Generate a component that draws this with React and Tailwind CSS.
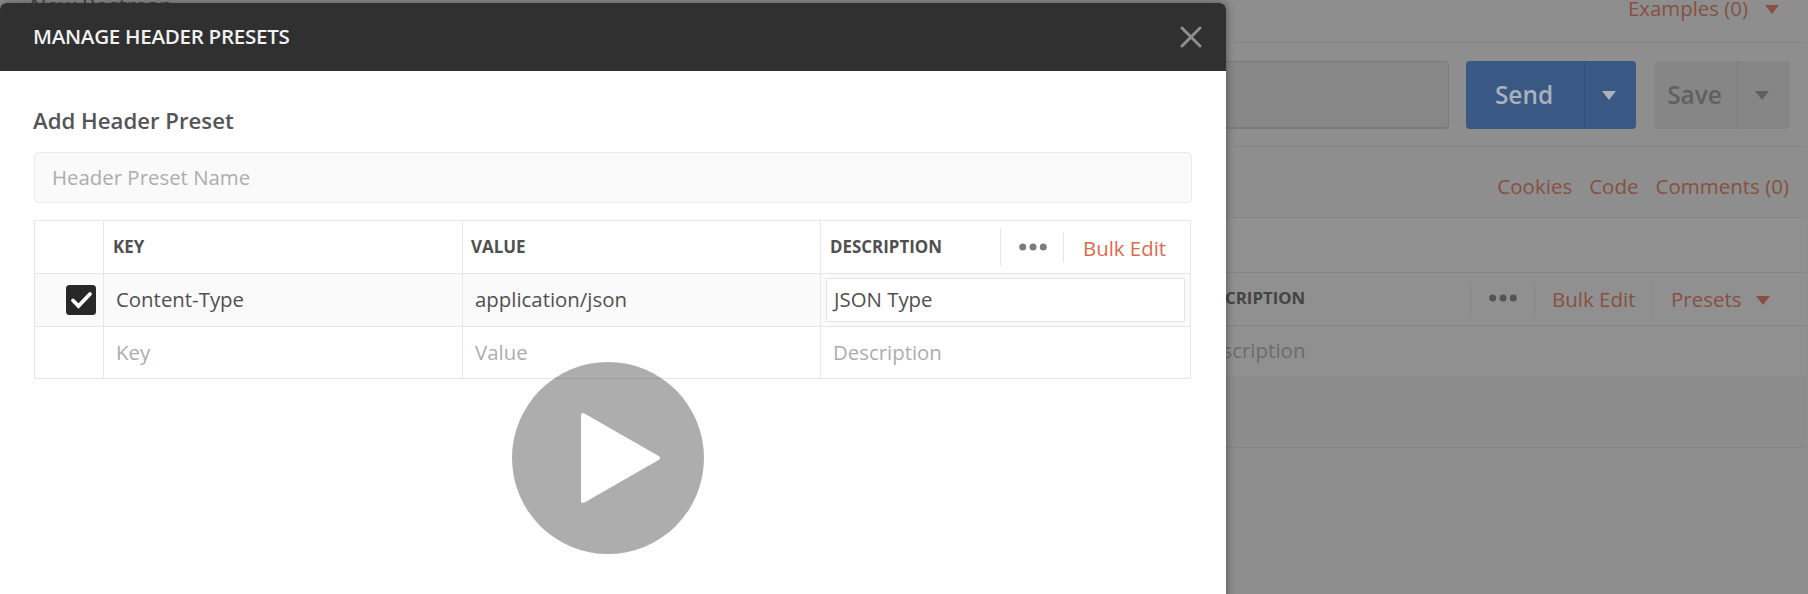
const ORANGE = "text-[#875042]";

function Caret({ className }) {
  return (
    <svg viewBox="0 0 14 9" className={`h-[9px] w-[14px] shrink-0 ${className}`} fill="currentColor">
      <path d="M0 0h14L7 9z" />
    </svg>
  );
}

function Dots({ className }) {
  return (
    <svg viewBox="0 0 28 8" className={`h-2 w-7 shrink-0 ${className}`} fill="currentColor">
      <circle cx="3.7" cy="4" r="3.5" />
      <circle cx="14" cy="4" r="3.5" />
      <circle cx="24.3" cy="4" r="3.5" />
    </svg>
  );
}

function RequestPage() {
  return (
    <div className="h-[594px] pr-[2px] text-[20.5px] leading-7 bg-[#8e8e8e]">
      <div className="flex h-[43px] justify-between border-b border-[#868686]">
        <div className="-mt-[9px] flex pl-1 text-[22px] text-[#444444]">
          <span className="w-[26px]">▸</span>
          <span>New Postman</span>
        </div>
        <div className={`flex items-start pr-[27px] ${ORANGE}`}>
          <span className="-mt-[6px] mr-[17px] text-[20.4px]">Examples (0)</span>
          <Caret className="mt-[5px]" />
        </div>
      </div>

      <div className="flex h-[104px] items-start border-b border-[#868686] pt-[18px] pr-[16px] text-[24.4px] font-semibold">
        <div className="h-[68px] flex-1 rounded-[4px] border border-b-2 border-[#7c7c7c] bg-[#878787]" />
        <div className="ml-[17px] flex h-[68px] w-[170px] rounded-[4px] bg-[#395884] text-[#a9b1bb]">
          <div className="flex w-[119px] items-center justify-center border-r border-[#33507a] pr-[2px]">Send</div>
          <div className="flex flex-1 items-center justify-center pr-[4px]">
            <Caret />
          </div>
        </div>
        <div className="ml-[18px] flex h-[68px] w-[136px] rounded-[4px] bg-[#868686] text-[#606060]">
          <div className="flex w-[84px] items-center justify-center border-r border-[#7d7d7d] pr-[2px]">Save</div>
          <div className="flex flex-1 items-center justify-center pr-[4px]">
            <Caret />
          </div>
        </div>
      </div>

      <div className={`flex h-[71px] items-center justify-end gap-[17px] border-b border-[#858585] pr-[17px] pt-[8px] ${ORANGE}`}>
        <span>Cookies</span>
        <span>Code</span>
        <span>Comments (0)</span>
      </div>

      <div className="h-[55px] border-b border-[#858585] bg-[#909090]" />
      <div className="flex h-[53px] items-center border-b border-[#838383] bg-[#909090] pl-[1194px]">
        <span className="-mt-[2px] w-[276px] text-[16.8px] font-bold text-[#444444]">DESCRIPTION</span>
        <div className="flex h-[37px] w-[64px] items-center justify-center border-l border-[#868686]">
          <Dots className="-mt-[2px] text-[#545454]" />
        </div>
        <div className={`flex h-[29px] w-[118px] items-center border-l border-[#868686] pl-[17px] ${ORANGE}`}>Bulk Edit</div>
        <div className={`flex h-[34px] items-center border-l border-[#868686] pl-[18px] ${ORANGE}`}>
          Presets
          <Caret className="ml-[14px] mt-[2px]" />
        </div>
      </div>
      <div className="flex h-[50px] items-center bg-[#909090] pb-[3px] pl-[1196px] text-[#6c6c6c]">Description</div>
      <div className="h-[72px] border-b border-[#858585] bg-[#8c8c8c]" />
    </div>
  );
}

const ROW = "grid grid-cols-[69px_359px_358px_370px] border-b border-[#e6e6e6]";
const CELL = "flex items-center border-r border-[#e8e8e8]";

function PresetTable() {
  return (
    <div className="mt-[17px] w-[1157px] border-l border-t border-[#e6e6e6]">
      <div className={`${ROW} h-[53px] text-[16.9px] font-bold text-[#505050]`}>
        <div className={CELL} />
        <div className={`${CELL} pl-[9px]`}>KEY</div>
        <div className={`${CELL} pl-[8px]`}>VALUE</div>
        <div className={`${CELL} pl-[9px]`}>
          <span className="w-[170px]">DESCRIPTION</span>
          <div className="flex h-[38px] w-[63px] items-center justify-center border-l border-[#e6e6e6] pl-[2px]">
            <Dots className="text-[#7c7c7c]" />
          </div>
          <div className="flex h-[30px] items-center border-l border-[#e6e6e6] pl-[19px] pt-[3px] text-[20.4px] font-normal text-[#dc6a4b]">
            Bulk Edit
          </div>
        </div>
      </div>
      <div className={`${ROW} h-[53px] bg-[#fafafa] text-[20.4px] text-[#505050]`}>
        <div className={`${CELL} justify-end pr-[7px]`}>
          <svg viewBox="0 0 30 30" className="size-[30px]">
            <rect width="30" height="30" rx="3.5" fill="#282828" />
            <path d="M7 15.5l5.5 5.5L24 9" fill="none" stroke="#fff" strokeWidth="3.8" strokeLinecap="round" />
          </svg>
        </div>
        <div className={`${CELL} pb-[2px] pl-[12px]`}>Content-Type</div>
        <div className={`${CELL} pb-[2px] pl-[12px]`}>application/json</div>
        <div className={`${CELL} pl-[5px] pr-[5px]`}>
          <div className="flex h-[44px] flex-1 items-center border border-[#e4e4e4] bg-white pb-[2px] pl-[7px]">JSON Type</div>
        </div>
      </div>
      <div className={`${ROW} h-[52px] text-[20.4px] text-[#adadad]`}>
        <div className={CELL} />
        <div className={`${CELL} pl-[12px]`}>Key</div>
        <div className={`${CELL} pl-[12px]`}>Value</div>
        <div className={`${CELL} pl-3`}>Description</div>
      </div>
    </div>
  );
}

function PresetDialog() {
  return (
    <div className="absolute left-0 top-[3px] h-[620px] w-[1226px] overflow-hidden rounded-md bg-white shadow-[0_0_8px_rgba(0,0,0,0.45)]">
      <div className="flex h-[68px] items-center justify-between bg-[#303030] pl-[33px] pr-[24px]">
        <h1 className="-mt-[2px] text-[20.6px] font-semibold tracking-[-0.3px] text-[#f2f2f2]">MANAGE HEADER PRESETS</h1>
        <svg viewBox="0 0 22 22" className="size-[22px] text-[#8f8f8f]" stroke="currentColor" strokeWidth="2.9" strokeLinecap="round">
          <path d="M2 2l18 18M20 2L2 20" />
        </svg>
      </div>
      <div className="px-[34px] pt-[34px]">
        <h2 className="-ml-px text-[22.2px] font-semibold leading-8 text-[#555555]">Add Header Preset</h2>
        <div className="mt-[15px] flex h-[51px] w-[1158px] items-center rounded-[4px] border border-[#ebebeb] bg-[#fafafa] pb-px pl-[17px] text-[20.4px] text-[#adadad]">
          Header Preset Name
        </div>
        <PresetTable />
      </div>
    </div>
  );
}

export default function App() {
  return (
    <div className="relative h-[594px] w-full overflow-hidden font-['Open_Sans',sans-serif]">
      <RequestPage />
      <PresetDialog />
      <svg viewBox="0 0 192 192" className="absolute left-[512px] top-[362px] size-[192px]">
        <circle cx="96" cy="96" r="96" fill="#000" fillOpacity=".32" />
        <path d="M71 53L146 96L71 139z" fill="#fff" stroke="#fff" strokeWidth="4" strokeLinejoin="round" />
      </svg>
    </div>
  );
}
